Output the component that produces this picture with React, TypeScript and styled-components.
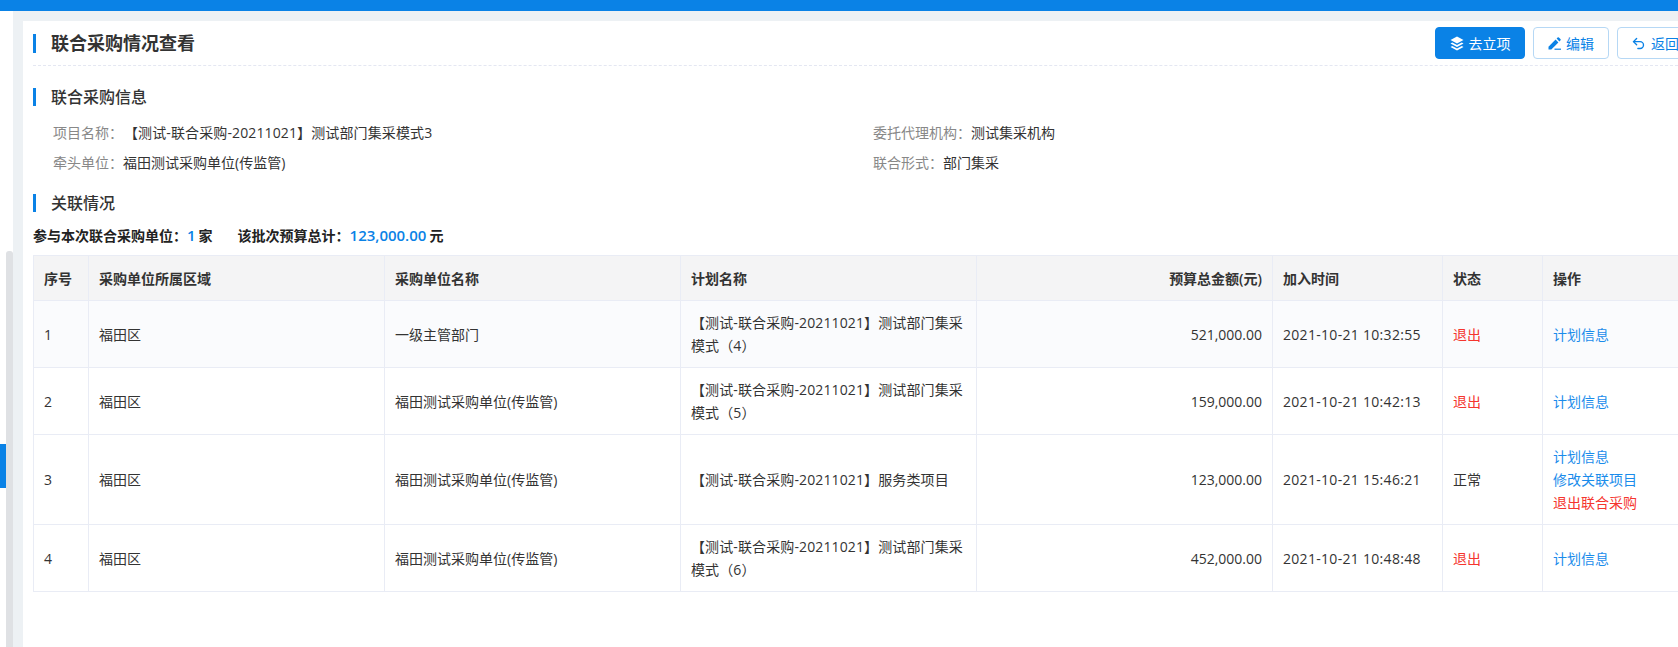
import styled, { createGlobalStyle } from "styled-components";
import { Undo2 } from "lucide-react";

const GlobalStyle = createGlobalStyle`
    html, body {
        margin: 0;
        padding: 0;
        background: #fff;
        overflow: hidden;
    }
    * {
        box-sizing: border-box;
    }
    body {
        font-family: "Open Sans", "Noto Sans CJK SC", sans-serif;
        font-size: 14px;
        color: #333;
        text-spacing-trim: space-all;
    }
`

const Page = styled.div`
    width: 1678px;
    height: 647px;
    display: flex;
    flex-direction: column;
    overflow: hidden;
`

const TopBar = styled.div`
    height: 11px;
    flex: none;
    background-color: #0a82e6;
`

const Body = styled.div`
    flex: 1;
    min-height: 0;
    display: flex;
`

const Rail = styled.div`
    width: 13px;
    flex: none;
    display: grid;
    grid-template-columns: 6px 7px;
    background-color: #fff;
`

const RailTab = styled.div`
    height: 44px;
    margin-top: 433px;
    background-color: #0a82e6;
`

const RailThumb = styled.div`
    margin-top: 240px;
    background-color: #dfe1e4;
    border-radius: 3px 3px 0 0;
`

const Content = styled.div`
    flex: 1;
    min-width: 0;
    padding: 10px 0 0 10px;
    background-color: #edf1f4;
`

const Panel = styled.main`
    height: 100%;
    padding: 6px 0 0 10px;
    display: flex;
    flex-direction: column;
    background-color: #fff;
    overflow: hidden;
`

const Header = styled.header`
    height: 39px;
    flex: none;
    margin-bottom: 6px;
    display: flex;
    align-items: flex-start;
    justify-content: space-between;
    border-bottom: 1px dashed #e4e7f2;
`

const PageTitle = styled.h1`
    margin: 7px 0 0;
    padding-left: 15px;
    border-left: 3px solid #0a82e6;
    font-size: 18px;
    font-weight: 700;
    line-height: 19px;
    color: #333;
`

const Actions = styled.div`
    display: flex;
    gap: 8px;
    margin-right: -15px;
`

interface ActionButtonProps {
    $primary?: boolean;
    $width: number;
}

const ActionButton = styled.button<ActionButtonProps>`
    width: ${(props) => props.$width}px;
    height: 32px;
    padding: 0;
    display: flex;
    align-items: center;
    justify-content: center;
    gap: 5px;
    font: inherit;
    font-size: 14px;
    border-radius: 4px;
    border: 1px solid ${(props) => props.$primary ? "#0a82e6" : "#b6d8f5"};
    background-color: ${(props) => props.$primary ? "#0a82e6" : "#fff"};
    color: ${(props) => props.$primary ? "#fff" : "#0a82e6"};
`

const SectionTitle = styled.h2`
    margin: 16px 0 0;
    padding-left: 15px;
    border-left: 3px solid #0a82e6;
    font-size: 16px;
    font-weight: 500;
    line-height: 18px;
    color: #333;
`

const InfoGrid = styled.div`
    display: grid;
    grid-template-columns: 820px 1fr;
    grid-auto-rows: 30px;
    align-items: center;
    margin: 12px 0 0 20px;
    line-height: 30px;
`

const InfoItem = styled.div`
    white-space: nowrap;
`

const InfoLabel = styled.span`
    color: #888;
`

const ProjectName = styled.span`
    margin-left: 1px;
    letter-spacing: 0.12px;
`

const Summary = styled.div`
    margin-top: 13px;
    display: flex;
    gap: 25px;
    font-weight: 600;
    line-height: 20px;
    color: #222;
`

const Amount = styled.span`
    margin-right: 3px;
    font-size: 15px;
    color: #0a82e6;
`

const TableWrap = styled.div`
    margin-top: 9px;
`

const Table = styled.table`
    width: 1666px;
    table-layout: fixed;
    border-collapse: collapse;
    font-size: 14px;
    line-height: 23px;

    th, td {
        padding: 10px;
        border: 1px solid #e9ecf5;
        text-align: left;
        color: #333;
    }

    th {
        height: 45px;
        font-weight: 600;
        background-color: #f4f4f5;
    }

    td {
        height: 67px;
    }

    tbody tr:first-child td {
        background-color: #fafbfd;
    }

    th.Money, td.Money {
        text-align: right;
    }

    td.Plan {
        letter-spacing: 0.12px;
    }

    td.Time {
        letter-spacing: 0.3px;
    }
`

interface TextProps {
    $color: string;
}

const StatusText = styled.span<TextProps>`
    color: ${(props) => props.$color};
`

const LinkText = styled.a<TextProps>`
    display: block;
    color: ${(props) => props.$color};
`

const BLUE = "#1a8ceb";
const RED = "#f5352e";

const LayersIcon = () => (
    <svg width="14" height="15" viewBox="0 0 14 15" fill="currentColor">
        <path d="M7 0.5 13.5 4 7 7.5 0.5 4Z" />
        <path d="M2.2 6.4 7 9 11.8 6.4 13.5 7.4 7 11 0.5 7.4Z" />
        <path d="M2.2 9.9 7 12.5 11.8 9.9 13.5 10.9 7 14.5 0.5 10.9Z" />
    </svg>
)

const PenIcon = () => (
    <svg width="13" height="13" viewBox="0 0 13 13" fill="currentColor">
        <path d="M0.5 12.5V9.7L7.6 2.6 10.4 5.4 3.3 12.5Z" />
        <path d="M8.6 1.6 9.6 0.6A0.9 0.9 0 0 1 10.9 0.6L12.4 2.1A0.9 0.9 0 0 1 12.4 3.4L11.4 4.4Z" />
        <rect x="6.5" y="11.6" width="6.5" height="1.2" />
    </svg>
)

const rows = [
    { no: 1, unit: "一级主管部门", plan: "【测试-联合采购-20211021】测试部门集采模式（4）", money: "521,000.00", time: "2021-10-21 10:32:55", quit: true },
    { no: 2, unit: "福田测试采购单位(传监管)", plan: "【测试-联合采购-20211021】测试部门集采模式（5）", money: "159,000.00", time: "2021-10-21 10:42:13", quit: true },
    { no: 3, unit: "福田测试采购单位(传监管)", plan: "【测试-联合采购-20211021】服务类项目", money: "123,000.00", time: "2021-10-21 15:46:21", quit: false },
    { no: 4, unit: "福田测试采购单位(传监管)", plan: "【测试-联合采购-20211021】测试部门集采模式（6）", money: "452,000.00", time: "2021-10-21 10:48:48", quit: true },
];

const App = () => {
    return (
        <Page>
            <GlobalStyle />
            <TopBar />
            <Body>
                <Rail>
                    <RailTab />
                    <RailThumb />
                </Rail>
                <Content>
                    <Panel>
                        <Header>
                            <PageTitle>联合采购情况查看</PageTitle>
                            <Actions>
                                <ActionButton $primary $width={90}><LayersIcon />去立项</ActionButton>
                                <ActionButton $width={76}><PenIcon />编辑</ActionButton>
                                <ActionButton $width={76}><Undo2 size={15} strokeWidth={2.2} />返回</ActionButton>
                            </Actions>
                        </Header>
                        <SectionTitle>联合采购信息</SectionTitle>
                        <InfoGrid>
                            <InfoItem><InfoLabel>项目名称：</InfoLabel><ProjectName>【测试-联合采购-20211021】测试部门集采模式3</ProjectName></InfoItem>
                            <InfoItem><InfoLabel>委托代理机构：</InfoLabel>测试集采机构</InfoItem>
                            <InfoItem><InfoLabel>牵头单位：</InfoLabel>福田测试采购单位(传监管)</InfoItem>
                            <InfoItem><InfoLabel>联合形式：</InfoLabel>部门集采</InfoItem>
                        </InfoGrid>
                        <SectionTitle>关联情况</SectionTitle>
                        <Summary>
                            <span>参与本次联合采购单位：<Amount>1</Amount>家</span>
                            <span>该批次预算总计：<Amount>123,000.00</Amount>元</span>
                        </Summary>
                        <TableWrap>
                            <Table>
                                <colgroup>
                                    <col width={55} />
                                    <col width={296} />
                                    <col width={296} />
                                    <col width={296} />
                                    <col width={296} />
                                    <col width={170} />
                                    <col width={100} />
                                    <col width={157} />
                                </colgroup>
                                <thead>
                                    <tr>
                                        <th>序号</th>
                                        <th>采购单位所属区域</th>
                                        <th>采购单位名称</th>
                                        <th>计划名称</th>
                                        <th className="Money">预算总金额(元)</th>
                                        <th>加入时间</th>
                                        <th>状态</th>
                                        <th>操作</th>
                                    </tr>
                                </thead>
                                <tbody>
                                    {rows.map((item) => {
                                        return (
                                            <tr key={item.no}>
                                                <td>{item.no}</td>
                                                <td>福田区</td>
                                                <td>{item.unit}</td>
                                                <td className="Plan">{item.plan}</td>
                                                <td className="Money">{item.money}</td>
                                                <td className="Time">{item.time}</td>
                                                <td>
                                                    {item.quit
                                                        ? <StatusText $color={RED}>退出</StatusText>
                                                        : <StatusText $color="#333">正常</StatusText>}
                                                </td>
                                                <td>
                                                    <LinkText $color={BLUE}>计划信息</LinkText>
                                                    {!item.quit && <LinkText $color={BLUE}>修改关联项目</LinkText>}
                                                    {!item.quit && <LinkText $color={RED}>退出联合采购</LinkText>}
                                                </td>
                                            </tr>
                                        )
                                    })}
                                </tbody>
                            </Table>
                        </TableWrap>
                    </Panel>
                </Content>
            </Body>
        </Page>
    )
}

export default App
